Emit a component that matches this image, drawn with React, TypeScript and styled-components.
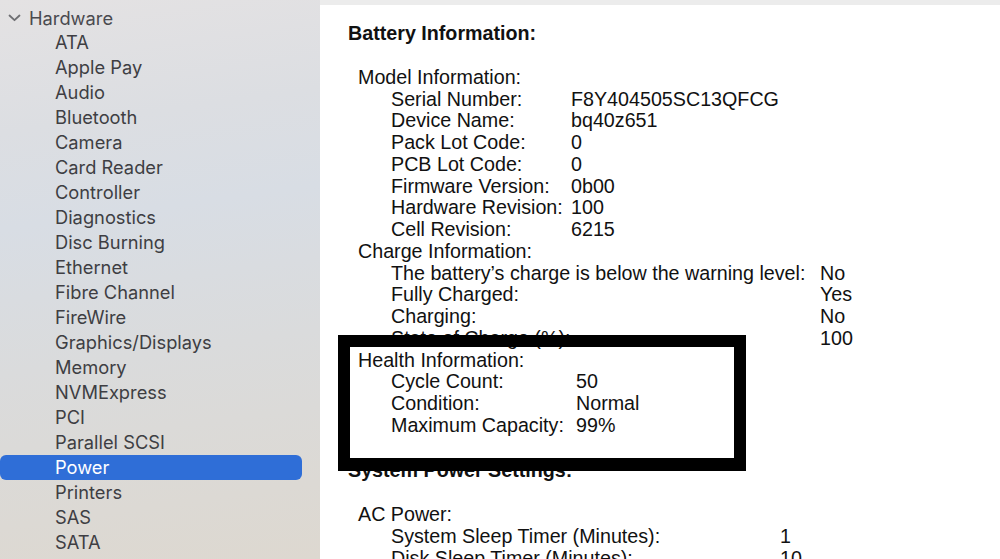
import React from "react";
import styled, { createGlobalStyle } from "styled-components";

const Global = createGlobalStyle`
  html, body { margin: 0; padding: 0; width: 1000px; height: 559px; overflow: hidden; background: #fff; }
  #root { width: 1000px; height: 559px; }
`;

const Window = styled.div`
  display: flex;
  width: 1000px;
  height: 559px;
  overflow: hidden;
`;

const Sidebar = styled.nav`
  width: 321px;
  flex: none;
  box-sizing: border-box;
  padding: 5px 18px 0 0;
  border-right: 1px solid #c9c6c3;
  background: linear-gradient(172deg, #e4e2e3 0%, #dcdee2 22%, #d8dde4 38%, #dadbdc 62%, #ddd8d0 100%);
  font-family: Inter, "Noto Sans", sans-serif;
  font-size: 18.3px;
  color: #3e3e43;
`;

const Group = styled.div`
  display: flex;
  align-items: center;
  height: 25px;
  padding-left: 8px;
  gap: 8px;
  color: #4a4a4f;
`;

const Item = styled.div<{ $selected?: boolean }>`
  height: 25px;
  line-height: 25px;
  padding-left: 55px;
  border-radius: 6px;
  background: ${(p) => (p.$selected ? "#2f6ed7" : "transparent")};
  color: ${(p) => (p.$selected ? "#ffffff" : "#3e3e43")};
`;

const Content = styled.main`
  position: relative;
  flex: 1;
  background: #ffffff;
  border-top: 5px solid #ececec;
  box-sizing: border-box;
  margin-left: -1px;
  font-family: "Liberation Sans", Arial, sans-serif;
  font-size: 19.7px;
  color: #111;
`;

const Contents = styled.div`
  padding: 16px 0 0 28px;
`;

const Title = styled.div`
  font-weight: bold;
  line-height: 24px;
  margin-bottom: 21.75px;
  white-space: nowrap;
`;

const Section = styled.div`
  padding-left: 10px;
  margin-bottom: 21.75px;
`;

const Block = styled.div<{ $spaced?: boolean }>`
  margin-bottom: ${(p) => (p.$spaced ? "21.75px" : "0")};
`;

const Heading = styled.div`
  line-height: 21.75px;
  white-space: nowrap;
`;

const Rows = styled.div<{ $label: number }>`
  display: grid;
  grid-template-columns: ${(p) => p.$label}px auto;
  padding-left: 33px;
  line-height: 21.75px;
  white-space: nowrap;
`;

const Cell = styled.div`
  white-space: nowrap;
`;

const Highlight = styled.div`
  position: absolute;
  left: 18px;
  top: 330px;
  width: 408px;
  height: 136px;
  box-sizing: border-box;
  border: 12px solid #000;
  border-bottom-width: 13px;
  pointer-events: none;
`;

const Chevron = () => (
  <svg width="13" height="8" viewBox="0 0 13 8" fill="none">
    <path d="M1.5 1.5 L6.5 6.2 L11.5 1.5" stroke="#6e6e72" strokeWidth="1.8" strokeLinecap="round" strokeLinejoin="round" />
  </svg>
);

const items = [
  "ATA", "Apple Pay", "Audio", "Bluetooth", "Camera", "Card Reader", "Controller",
  "Diagnostics", "Disc Burning", "Ethernet", "Fibre Channel", "FireWire",
  "Graphics/Displays", "Memory", "NVMExpress", "PCI", "Parallel SCSI", "Power",
  "Printers", "SAS", "SATA",
];

type GroupData = { heading: string; label: number; rows: [string, string][] };

const groups: GroupData[] = [
  {
    heading: "Model Information:",
    label: 180,
    rows: [
      ["Serial Number:", "F8Y404505SC13QFCG"],
      ["Device Name:", "bq40z651"],
      ["Pack Lot Code:", "0"],
      ["PCB Lot Code:", "0"],
      ["Firmware Version:", "0b00"],
      ["Hardware Revision:", "100"],
      ["Cell Revision:", "6215"],
    ],
  },
  {
    heading: "Charge Information:",
    label: 429,
    rows: [
      ["The battery\u2019s charge is below the warning level:", "No"],
      ["Fully Charged:", "Yes"],
      ["Charging:", "No"],
      ["State of Charge (%):", "100"],
    ],
  },
  {
    heading: "Health Information:",
    label: 185,
    rows: [
      ["Cycle Count:", "50"],
      ["Condition:", "Normal"],
      ["Maximum Capacity:", "99%"],
    ],
  },
];

const power: GroupData = {
  heading: "AC Power:",
  label: 389,
  rows: [
    ["System Sleep Timer (Minutes):", "1"],
    ["Disk Sleep Timer (Minutes):", "10"],
  ],
};

const renderGroup = (g: GroupData, spaced: boolean) => (
  <Block key={g.heading} $spaced={spaced}>
    <Heading>{g.heading}</Heading>
    <Rows $label={g.label}>
      {g.rows.map(([k, v]) => (
        <React.Fragment key={k}>
          <Cell>{k}</Cell>
          <Cell>{v}</Cell>
        </React.Fragment>
      ))}
    </Rows>
  </Block>
);

export default function App() {
  return (
    <>
      <Global />
      <Window>
        <Sidebar>
          <Group>
            <Chevron />
            <span>Hardware</span>
          </Group>
          {items.map((it) => (
            <Item key={it} $selected={it === "Power"}>
              {it}
            </Item>
          ))}
        </Sidebar>
        <Content>
          <Contents>
            <Title>Battery Information:</Title>
            <Section>{groups.map((g) => renderGroup(g, false))}</Section>
            <Title>System Power Settings:</Title>
            <Section>{renderGroup(power, false)}</Section>
          </Contents>
          <Highlight />
        </Content>
      </Window>
    </>
  );
}
